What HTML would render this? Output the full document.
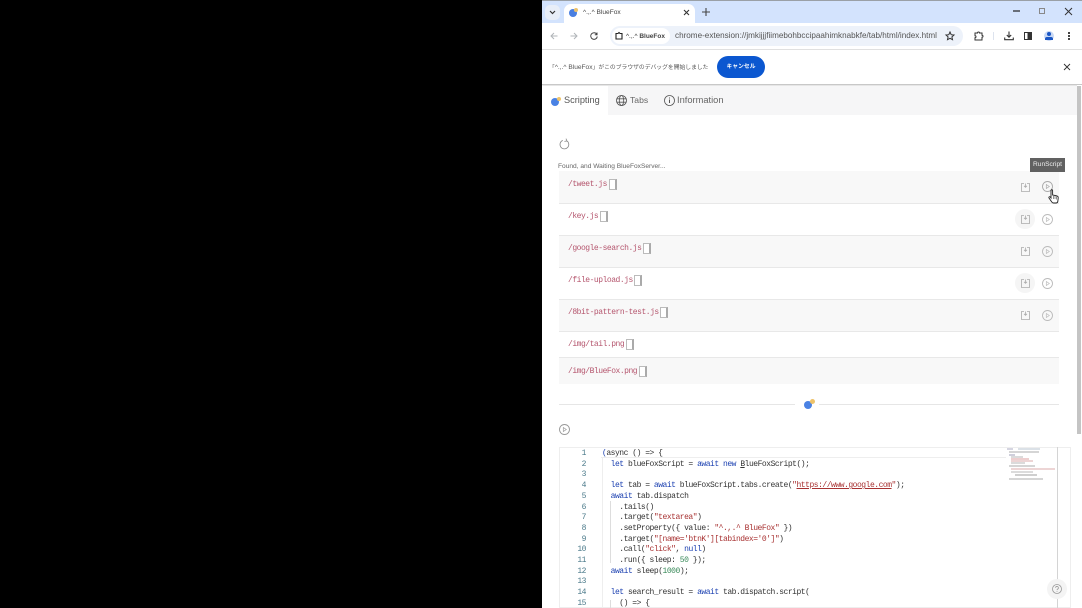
<!DOCTYPE html>
<html><head><meta charset="utf-8">
<style>
*{box-sizing:border-box}
html,body{margin:0;padding:0;width:1082px;height:608px;overflow:hidden;background:#000;font-family:"Liberation Sans","Noto Sans CJK JP",sans-serif}
.a{position:absolute;white-space:nowrap}
svg{position:absolute;overflow:visible}
#w{position:absolute;left:542px;top:0;width:540px;height:608px;background:#fff;overflow:hidden;filter:blur(.3px)}
.row{position:absolute;left:17px;width:500px;border-bottom:1px solid #e8e8e8}
.g{background:#f8f8f8}
.fn{position:absolute;left:26px;font:8px/12px "Liberation Mono",monospace;letter-spacing:-.48px;color:#b5566e;white-space:nowrap}
.cp{position:absolute;width:8px;height:11px;border:1px solid #bbb;background:#fff;border-right:2px solid #aaa}
.ln{position:absolute;left:17px;width:27px;text-align:right;font:8px/10.7px "Liberation Mono",monospace;letter-spacing:-.48px;color:#4b7a8a}
.cd{position:absolute;left:60px;font:8px/10.7px "Liberation Mono",monospace;letter-spacing:-.48px;color:#333;white-space:pre}
.k{color:#1a3fb0}.s{color:#a83232}.n{color:#3a8a5a}
</style></head><body>
<div id="w">
<!-- tab strip -->
<div class="a" style="left:0;top:0;width:540px;height:24px;background:#d3e3fd;border-top:1px solid #9aa0a6"></div>
<div class="a" style="left:3px;top:5px;width:15px;height:15px;background:#e8eef8;border-radius:5px"></div>
<svg style="left:7px;top:10px" width="7" height="5"><path d="M1 1l2.500 2.500L6 1" fill="none" stroke="#333" stroke-width="1.2"/></svg>
<div class="a" style="left:22px;top:4px;width:131px;height:20px;background:#fff;border-radius:7px 7px 0 0"></div>
<div class="a" style="left:27px;top:9px;width:8px;height:8px;border-radius:50%;background:#4a7fe0"></div>
<div class="a" style="left:32px;top:8px;width:4px;height:4px;border-radius:50%;background:#eec36a"></div>
<div class="a" style="left:41px;top:7px;font-size:6.6px;line-height:11px;color:#444">^.,.^ BlueFox</div>
<svg style="left:141px;top:9px" width="7" height="7"><path d="M1 1l5 5M6 1l-5 5" stroke="#333" stroke-width="1.1"/></svg>
<svg style="left:160px;top:8px" width="8" height="8"><path d="M4 0v8M0 4h8" stroke="#444" stroke-width="1.1"/></svg>
<svg style="left:471px;top:10px" width="7" height="2"><path d="M0 1h7" stroke="#222" stroke-width="1.2"/></svg>
<div class="a" style="left:497px;top:8px;width:6px;height:6px;border:1px solid #888"></div>
<svg style="left:523px;top:8px" width="7" height="7"><path d="M0 0l7 7M7 0l-7 7" stroke="#333" stroke-width="1"/></svg>
<!-- toolbar -->
<div class="a" style="left:0;top:23px;width:540px;height:27px;background:#fff;border-bottom:1px solid #e3e3e3"></div>
<svg style="left:8px;top:32px" width="8" height="8"><path d="M7.500 4H1M4 1L1 4l3 3" fill="none" stroke="#b0b4b8" stroke-width="1"/></svg>
<svg style="left:28px;top:32px" width="8" height="8"><path d="M.5 4H7M4 1l3 3-3 3" fill="none" stroke="#b0b4b8" stroke-width="1"/></svg>
<svg style="left:48px;top:32px" width="8" height="8"><path d="M6.800 2.200A3.300 3.300 0 1 0 7.300 4.500M7 .5v2.300H4.800" fill="none" stroke="#444" stroke-width="1"/></svg>
<div class="a" style="left:68px;top:26px;width:353px;height:20px;background:#edf2fa;border-radius:10px"></div>
<div class="a" style="left:70px;top:28px;width:58px;height:16px;background:#fff;border-radius:8px"></div>
<svg style="left:73px;top:32px" width="8" height="8"><path d="M1 1.500h2l1-1 1 1h2v5.500H1z" fill="none" stroke="#222" stroke-width="1.1"/></svg>
<div class="a" style="left:84px;top:31px;font-size:6.5px;line-height:11px;color:#333">^.,.^ <span style="font-weight:bold;color:#444">BlueFox</span></div>
<div class="a" style="left:133px;top:30px;font-size:8.13px;line-height:12px;color:#555">chrome-extension://jmkijjjfiimebohbccipaahimknabkfe/tab/html/index.html</div>
<svg style="left:403px;top:31px" width="10" height="10"><path d="M5 1l1.200 2.700 2.800.3-2.100 1.900.6 2.800L5 7.300 2.500 8.700l.6-2.800L1 4l2.800-.3z" fill="none" stroke="#333" stroke-width="1"/></svg>
<svg style="left:432px;top:31px" width="10" height="10"><path d="M1 2h2.500a1 1 0 0 1 2 0H8v2.200a1 1 0 0 1 0 2V9H1V6.700a1 1 0 0 0 0-2z" fill="none" stroke="#333" stroke-width="1"/></svg>
<div class="a" style="left:451px;top:32px;width:1px;height:8px;background:#dde3ee"></div>
<svg style="left:462px;top:31px" width="10" height="10"><path d="M5 .5v5.500M2.800 4L5 6.200 7.200 4M.7 6.500v2.200h8.600V6.500" fill="none" stroke="#333" stroke-width="1.1"/></svg>
<div class="a" style="left:482px;top:32px;width:8px;height:8px;border:1px solid #333;background:linear-gradient(90deg,#fff 45%,#333 45%)"></div>
<div class="a" style="left:502px;top:31px;width:10px;height:10px;border-radius:50%;background:#c8d8f4"></div>
<div class="a" style="left:505px;top:32px;width:4px;height:4px;border-radius:50%;background:#1a56c4"></div>
<div class="a" style="left:503px;top:37px;width:8px;height:3px;border-radius:2px 2px 0 0;background:#1a56c4"></div>
<div class="a" style="left:526px;top:32px;width:2px;height:2px;background:#444;box-shadow:0 3px 0 #444,0 6px 0 #444"></div>
<!-- infobar -->
<div class="a" style="left:0;top:50px;width:540px;height:35px;background:#fff;border-bottom:1px solid #c8c8c8;box-shadow:0 1px 2px rgba(0,0,0,.15)"></div>
<div class="a" style="left:7px;top:62px;font-size:5.8px;line-height:12px;color:#555">「<span style="font-size:6.6px">^.,.^ BlueFox</span>」がこのブラウザのデバッグを開始しました</div>
<div class="a" style="left:175px;top:56px;width:48px;height:22px;background:#0b57d0;border-radius:11px;color:#fff;font-size:5.8px;font-weight:bold;line-height:23px;text-align:center">キャンセル</div>
<svg style="left:522px;top:64px" width="6" height="6"><path d="M0 0l6 6M6 0l-6 6" stroke="#333" stroke-width=".9"/></svg>
<!-- tabs bar -->
<div class="a" style="left:0;top:86px;width:535px;height:29px;background:#f6f6f7"></div>
<div class="a" style="left:0;top:86px;width:66px;height:29px;background:#fff"></div>
<div class="a" style="left:9px;top:98px;width:8px;height:8px;border-radius:50%;background:#4a82e4"></div>
<div class="a" style="left:15px;top:97px;width:4px;height:4px;border-radius:50%;background:#eec36a"></div>
<div class="a" style="left:22px;top:94px;font-size:9.2px;line-height:12px;color:#555">Scripting</div>
<svg style="left:74px;top:95px" width="11" height="11"><g fill="none" stroke="#555" stroke-width=".8"><circle cx="5.500" cy="5.500" r="5"/><ellipse cx="5.500" cy="5.500" rx="2.200" ry="5"/><path d="M.7 3.800h9.600M.7 7.200h9.600"/></g></svg>
<div class="a" style="left:88px;top:94px;font-size:8.6px;line-height:12px;color:#666">Tabs</div>
<svg style="left:122px;top:95px" width="11" height="11"><circle cx="5.500" cy="5.500" r="5" fill="none" stroke="#555" stroke-width=".8"/><path d="M5.500 4.500v3.500M5.500 2.500v1" stroke="#555"/></svg>
<div class="a" style="left:135px;top:94px;font-size:9.3px;line-height:12px;color:#666">Information</div>
<!-- scrollbar -->
<div class="a" style="left:535px;top:85px;width:5px;height:523px;background:#fff"></div>
<div class="a" style="left:535px;top:86px;width:4px;height:348px;background:#c4c4c4"></div>
<!-- reload -->
<svg style="left:17px;top:138px" width="11" height="12"><path d="M7.800 2.800A4.400 4.400 0 1 1 3.800 2.400M7 .6l.9 2.400-2.500.4" fill="none" stroke="#888" stroke-width=".8"/></svg>
<div class="a" style="left:16px;top:161px;font-size:6.6px;line-height:11px;color:#666">Found, and Waiting BlueFoxServer...</div>
<!-- rows -->
<div class="row g" style="top:171px;height:33px"></div>
<div class="row" style="top:204px;height:32px"></div>
<div class="row g" style="top:236px;height:32px"></div>
<div class="row" style="top:268px;height:32px"></div>
<div class="row g" style="top:300px;height:32px"></div>
<div class="row" style="top:332px;height:26px"></div>
<div class="row g" style="top:358px;height:26px;border:0"></div>
<div class="fn" style="top:179px">/tweet.js</div><div class="cp" style="left:67px;top:179px"></div>
<div class="fn" style="top:211px">/key.js</div><div class="cp" style="left:58px;top:211px"></div>
<div class="fn" style="top:243px">/google-search.js</div><div class="cp" style="left:101px;top:243px"></div>
<div class="fn" style="top:275px">/file-upload.js</div><div class="cp" style="left:92px;top:275px"></div>
<div class="fn" style="top:307px">/8bit-pattern-test.js</div><div class="cp" style="left:118px;top:307px"></div>
<div class="fn" style="top:339px">/img/tail.png</div><div class="cp" style="left:84px;top:339px"></div>
<div class="fn" style="top:366px">/img/BlueFox.png</div><div class="cp" style="left:97px;top:366px"></div>
<!-- row icons -->
<div class="a" style="left:473px;top:209px;width:20px;height:20px;border-radius:50%;background:#f5f5f5"></div>
<div class="a" style="left:473px;top:273px;width:20px;height:20px;border-radius:50%;background:#f5f5f5"></div>
<svg style="left:479px;top:183px" width="9" height="9"><path d="M3 .5H.5v8h8v-8H6M4.500.5v3.500M3 2.800l1.500 1.500L6 2.800" fill="none" stroke="#aaa" stroke-width=".8"/></svg>
<svg style="left:479px;top:215px" width="9" height="9"><path d="M3 .5H.5v8h8v-8H6M4.500.5v3.500M3 2.800l1.500 1.500L6 2.800" fill="none" stroke="#aaa" stroke-width=".8"/></svg>
<svg style="left:479px;top:247px" width="9" height="9"><path d="M3 .5H.5v8h8v-8H6M4.500.5v3.500M3 2.800l1.500 1.500L6 2.800" fill="none" stroke="#aaa" stroke-width=".8"/></svg>
<svg style="left:479px;top:279px" width="9" height="9"><path d="M3 .5H.5v8h8v-8H6M4.500.5v3.500M3 2.800l1.500 1.500L6 2.800" fill="none" stroke="#aaa" stroke-width=".8"/></svg>
<svg style="left:479px;top:311px" width="9" height="9"><path d="M3 .5H.5v8h8v-8H6M4.500.5v3.500M3 2.800l1.500 1.500L6 2.800" fill="none" stroke="#aaa" stroke-width=".8"/></svg>
<svg style="left:500px;top:181px" width="11" height="11"><circle cx="5.500" cy="5.500" r="5" fill="none" stroke="#aaa" stroke-width=".9"/><path d="M4.300 3.500l3 2-3 2z" fill="none" stroke="#aaa" stroke-width=".7"/></svg>
<svg style="left:500px;top:213.500px" width="11" height="11"><circle cx="5.500" cy="5.500" r="5" fill="none" stroke="#bbb" stroke-width=".9"/><path d="M4.300 3.500l3 2-3 2z" fill="none" stroke="#bbb" stroke-width=".7"/></svg>
<svg style="left:500px;top:245.500px" width="11" height="11"><circle cx="5.500" cy="5.500" r="5" fill="none" stroke="#bbb" stroke-width=".9"/><path d="M4.300 3.500l3 2-3 2z" fill="none" stroke="#bbb" stroke-width=".7"/></svg>
<svg style="left:500px;top:277.500px" width="11" height="11"><circle cx="5.500" cy="5.500" r="5" fill="none" stroke="#bbb" stroke-width=".9"/><path d="M4.300 3.500l3 2-3 2z" fill="none" stroke="#bbb" stroke-width=".7"/></svg>
<svg style="left:500px;top:309.500px" width="11" height="11"><circle cx="5.500" cy="5.500" r="5" fill="none" stroke="#bbb" stroke-width=".9"/><path d="M4.300 3.500l3 2-3 2z" fill="none" stroke="#bbb" stroke-width=".7"/></svg>
<!-- tooltip & cursor -->
<div class="a" style="left:488px;top:158px;width:35px;height:14px;background:#616161;color:#eee;font-size:6.6px;line-height:14px;text-align:center">RunScript</div>
<svg style="left:506px;top:189px" width="12" height="16"><path d="M3 1.500c0-1 1.600-1 1.600 0V6l4 .8c1.400.3 1.700 1 1.600 2.200L9.800 12.500c-.2 1-.8 1.500-1.800 1.500H5.500c-.8 0-1.300-.4-1.700-1L1 9c-.6-.9.600-1.800 1.300-1L3 9z" fill="#fff" stroke="#222" stroke-width=".9"/><path d="M5.500 7v3M7 7v3M8.500 7.500v3" stroke="#222" stroke-width=".5"/></svg>
<!-- divider -->
<div class="a" style="left:17px;top:404px;width:236px;height:1px;background:#e6e6e6"></div>
<div class="a" style="left:277px;top:404px;width:240px;height:1px;background:#e6e6e6"></div>
<div class="a" style="left:262px;top:401px;width:8px;height:8px;border-radius:50%;background:#4a82e4"></div>
<div class="a" style="left:268px;top:399px;width:5px;height:5px;border-radius:50%;background:#eec36a"></div>
<svg style="left:17px;top:424px" width="11" height="11"><circle cx="5.500" cy="5.500" r="5" fill="none" stroke="#999" stroke-width=".9"/><path d="M4.300 3.500l3 2-3 2z" fill="none" stroke="#999" stroke-width=".7"/></svg>
<!-- editor -->
<div class="a" style="left:17px;top:447px;width:512px;height:161px;background:#fff;border:1px solid #eee"></div>
<div class="a" style="left:59px;top:447px;width:405px;height:11px;border-bottom:1px solid #eee;border-top:1px solid #eee"></div>
<div class="a" style="left:515px;top:447px;width:1px;height:161px;background:#d4d4d4"></div>
<div class="a" style="left:68px;top:501px;width:1px;height:62px;background:#ddd"></div>
<div class="a" style="left:68px;top:600px;width:1px;height:8px;background:#ddd"></div>
<div class="a" style="left:60px;top:458px;width:1px;height:150px;background:#eee"></div>
<div class="ln" style="top:449px">1<br>2<br>3<br>4<br>5<br>6<br>7<br>8<br>9<br>10<br>11<br>12<br>13<br>14<br>15</div>
<div class="cd" style="top:449px"><span class="k">(</span>async () =&gt; {
  <span class="k">let</span> blueFoxScript = <span class="k">await new</span> <u>B</u>lueFoxScript();

  <span class="k">let</span> tab = <span class="k">await</span> blueFoxScript.tabs.create(<span class="s">"<u>https://www.google.com</u>"</span>);
  <span class="k">await</span> tab.dispatch
    .tails()
    .target(<span class="s">"textarea"</span>)
    .setProperty({ value: <span class="s">"^.,.^ BlueFox"</span> })
    .target(<span class="s">"[name='btnK'][tabindex='0']"</span>)
    .call(<span class="s">"click"</span>, <span class="k">null</span>)
    .run({ sleep: <span class="n">50</span> });
  <span class="k">await</span> sleep(<span class="n">1000</span>);

  <span class="k">let</span> search_result = <span class="k">await</span> tab.dispatch.script(
    () =&gt; {</div>
<!-- minimap -->
<svg style="left:464px;top:447px" width="50" height="36"><g stroke-width="1" fill="none" opacity=".7"><path d="M1 2h6" stroke="#88a"/><path d="M12 2h22" stroke="#9ab"/><path d="M3 5h30" stroke="#888"/><path d="M3 8h6" stroke="#779"/><path d="M5 10h12" stroke="#999"/><path d="M5 12h18" stroke="#c77"/><path d="M5 14h22" stroke="#c88"/><path d="M5 16h14" stroke="#999"/><path d="M3 19h26" stroke="#888"/><path d="M5 22h44" stroke="#c88"/><path d="M5 25h22" stroke="#999"/><path d="M9 28h22" stroke="#777"/><path d="M3 32h34" stroke="#888"/></g></svg>
<!-- help -->
<div class="a" style="left:505px;top:579px;width:20px;height:20px;border-radius:50%;background:#f4f4f4"></div>
<svg style="left:510px;top:584px" width="10" height="10"><circle cx="5" cy="5" r="4.500" fill="none" stroke="#999" stroke-width=".8"/><path d="M3.600 3.800a1.400 1.400 0 1 1 2 1.300c-.5.300-.6.500-.6 1M5 7v.8" fill="none" stroke="#999" stroke-width=".8"/></svg>
</div>
</body></html>
